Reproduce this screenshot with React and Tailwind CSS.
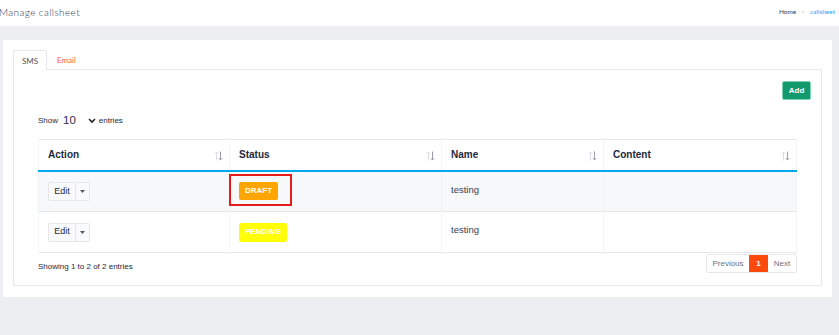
import React from "react";

const SortIcon = () => (
  <svg width="9" height="10" viewBox="0 0 9 10" className="mr-[-3px] mt-[2px]">
    <path d="M2.5 9.5V1M0.8 2.8L2.5 1l1.7 1.8" stroke="#dcdde3" strokeWidth="1" fill="none" />
    <path d="M6.5 0.5V9M4.8 7.2L6.5 9l1.7-1.8" stroke="#9b9ca8" strokeWidth="1" fill="none" />
  </svg>
);

function EditButton() {
  return (
    <div className="flex h-[19px] w-[42px] rounded-[2px] border border-gray-200 bg-gray-50 text-[9px] text-gray-800">
      <span className="flex flex-1 items-center justify-center border-r border-gray-200">Edit</span>
      <span className="flex w-[13px] items-center justify-center">
        <svg width="5" height="3" viewBox="0 0 5 3">
          <path d="M0 0h5L2.5 3z" fill="#555" />
        </svg>
      </span>
    </div>
  );
}

const rows = [
  { status: "DRAFT", badge: "bg-[#ffa500] w-[39px] h-[18px]", name: "testing", highlight: true, bg: "bg-[#f7f8fa]" },
  { status: "PENDING", badge: "bg-[#ffff00] w-[48px] h-[19px]", name: "testing", highlight: false, bg: "bg-white" },
];

export default function App() {
  return (
    <div className="h-[335px] w-[839px] bg-[#eceef2] font-['Liberation_Sans',Arial,sans-serif]">
      <div className="flex h-[26px] items-center justify-between bg-white pr-[4px]">
        <span className="-ml-[1px] -mt-[2px] font-['Lato',sans-serif] text-[10px] font-light tracking-[0.4px] text-gray-700">
          Manage callsheet
        </span>
        <span className="-mt-[2px] flex items-center gap-[5px] font-['Lato',sans-serif] text-[6.5px]">
          <span className="text-gray-700">Home</span>
          <span className="text-gray-300">&gt;</span>
          <span className="text-[#2ea3f2]">callsheet</span>
        </span>
      </div>

      <div className="pl-[3px] pr-[7px] pt-[14px]">
        <div className="h-[257px] bg-white px-[10px] pt-[10px]">
          <div className="flex h-[20px] items-end font-['Lato',sans-serif] text-[8px]">
            <div className="flex h-[20px] w-[34px] items-center justify-center rounded-t-[2px] border border-b-0 border-gray-200 bg-white text-gray-600">
              SMS
            </div>
            <div className="h-[20px] w-[10px] border-b border-gray-200" />
            <div className="flex h-[20px] items-center border-b border-gray-200 pr-[4px] text-[#ff5a36]">Email</div>
            <div className="h-[20px] flex-1 border-b border-gray-200" />
          </div>

          <div className="h-[216px] border border-t-0 border-gray-200">
            <div className="flex justify-end pr-[10px] pt-[11px]">
              <button className="h-[19px] w-[29px] rounded-[2px] border border-[#7cd3b4] bg-[#13996e] text-[8px] font-bold text-white">
                Add
              </button>
            </div>

            <div className="px-[24px]">
              <div className="mt-[13px] flex h-[16px] items-center text-[8px] text-gray-800">
                <span>Show</span>
                <span className="ml-[5px] text-[11.5px] text-[#2c2c4a]">10</span>
                <svg className="ml-[12px]" width="8" height="6" viewBox="0 0 8 6">
                  <path d="M1 1l3 3 3-3" stroke="#222" strokeWidth="1.6" fill="none" />
                </svg>
                <span className="ml-[3px]">entries</span>
              </div>

              <table className="mt-[10px] w-full border-collapse text-left">
                <thead>
                  <tr className="h-[31px] border-t border-gray-200 text-[10px] font-bold text-gray-800">
                    {[
                      ["Action", "w-[191px]"],
                      ["Status", "w-[212px]"],
                      ["Name", "w-[162px]"],
                      ["Content", ""],
                    ].map(([h, w]) => (
                      <th key={h} className={`${w} border-x border-b-2 border-x-gray-100 border-b-[#00a9ee] px-[9px] font-bold`}>
                        <div className="flex items-center justify-between">
                          <span>{h}</span>
                          <SortIcon />
                        </div>
                      </th>
                    ))}
                  </tr>
                </thead>
                <tbody className="text-[9.5px] text-gray-700">
                  {rows.map((r, i) => (
                    <tr key={i} className={`h-[41px] border-b border-gray-200 ${r.bg}`}>
                      <td className="border-x border-gray-100 px-[9px]">
                        <EditButton />
                      </td>
                      <td className="border-x border-gray-100 px-[9px]">
                        <div className="relative">
                          <span className={`flex items-center justify-center rounded-[2px] text-[8px] font-bold text-white ${r.badge}`}>
                            {r.status}
                          </span>
                          {r.highlight && (
                            <div className="absolute -left-[10px] -top-[8px] h-[32px] w-[63px] border-2 border-[#e51a1a]" />
                          )}
                        </div>
                      </td>
                      <td className="border-x border-gray-100 px-[9px] align-top pt-[11px]">{r.name}</td>
                      <td className="border-x border-gray-100 px-[9px]"></td>
                    </tr>
                  ))}
                </tbody>
              </table>

              <div className="flex items-start justify-between">
                <span className="mt-[8px] text-[8px] text-gray-800">Showing 1 to 2 of 2 entries</span>
                <div className="mt-[1px] flex h-[19px] overflow-hidden rounded-[2px] border border-gray-200 text-[8px]">
                  <span className="flex w-[42px] items-center justify-center text-gray-500">Previous</span>
                  <span className="flex w-[19px] items-center justify-center bg-[#ff4a0d] font-bold text-white">1</span>
                  <span className="flex w-[28px] items-center justify-center text-gray-500">Next</span>
                </div>
              </div>
            </div>
          </div>
        </div>
      </div>
    </div>
  );
}
